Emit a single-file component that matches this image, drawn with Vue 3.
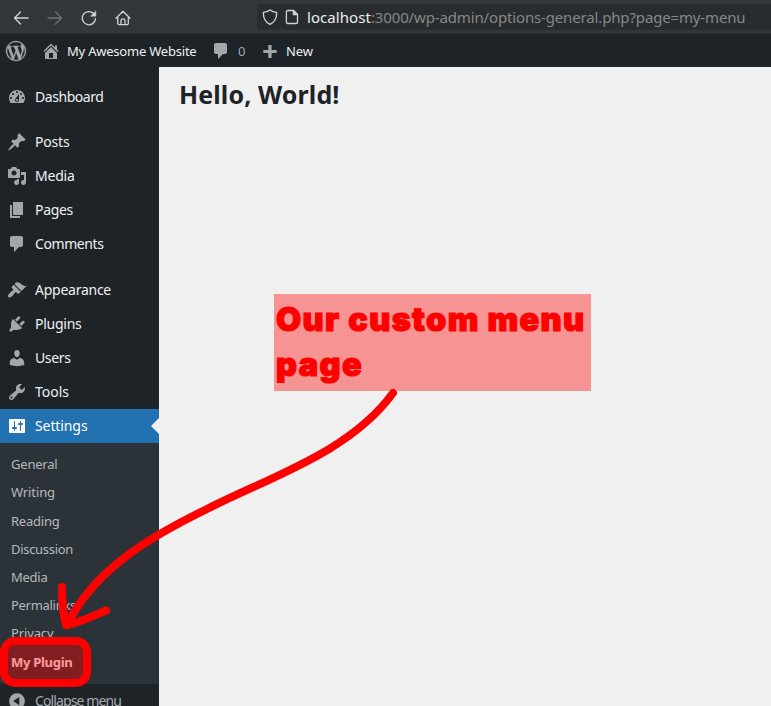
<script setup>
const P = {
  wordpress: 'M20 10c0-5.51-4.49-10-10-10C4.48 0 0 4.49 0 10c0 5.52 4.48 10 10 10 5.51 0 10-4.48 10-10zM7.78 15.37L4.37 6.22c.55-.02 1.17-.08 1.17-.08.5-.06.44-1.13-.06-1.11 0 0-1.45.11-2.37.11-.18 0-.37 0-.58-.01C4.12 2.69 6.87 1.11 10 1.11c2.33 0 4.45.87 6.05 2.34-.68-.11-1.65.39-1.65 1.58 0 .74.45 1.36.9 2.1.35.61.55 1.36.55 2.46 0 1.49-1.4 5-1.4 5l-3.03-8.37c.54-.02.82-.17.82-.17.5-.05.44-1.25-.06-1.22 0 0-1.44.12-2.38.12-.87 0-2.33-.12-2.33-.12-.5-.03-.56 1.2-.06 1.22l.92.08 1.26 3.41zM17.41 10c.24-.64.74-1.87.43-4.25.7 1.29 1.05 2.71 1.05 4.25 0 3.29-1.73 6.24-4.4 7.78.97-2.59 1.94-5.2 2.92-7.78zM6.1 18.09C3.12 16.65 1.11 13.53 1.11 10c0-1.3.23-2.48.72-3.59C3.25 10.3 4.67 14.2 6.1 18.09zm4.03-6.63l2.58 6.98c-.86.29-1.76.45-2.71.45-.79 0-1.57-.11-2.29-.33.81-2.38 1.62-4.74 2.42-7.1z',
  home: 'M16 8.5l1.53 1.53-1.06 1.06L10 4.6l-6.47 6.49-1.06-1.06L10 2.5l4 4v-2h2v4zm-6-2.46l6 5.99V18H4v-5.97zM12 17v-5H8v5h4z',
  comments: 'M5 2h9c1.1 0 2 .9 2 2v7c0 1.1-.9 2-2 2h-2l-5 5v-5H5c-1.1 0-2-.9-2-2V4c0-1.1.9-2 2-2z',
  dashboard: 'M3.76 16h12.48c1.1-1.37 1.76-3.11 1.76-5 0-4.42-3.58-8-8-8s-8 3.58-8 8c0 1.89.66 3.63 1.76 5zM10 4c.55 0 1 .45 1 1s-.45 1-1 1-1-.45-1-1 .45-1 1-1zM6 6c.55 0 1 .45 1 1s-.45 1-1 1-1-.45-1-1 .45-1 1-1zm8 0c.55 0 1 .45 1 1s-.45 1-1 1-1-.45-1-1 .45-1 1-1zm-5.37 5.55L12 7v6c0 1.1-.9 2-2 2s-2-.9-2-2c0-.57.24-1.08.63-1.45zM4 10c.55 0 1 .45 1 1s-.45 1-1 1-1-.45-1-1 .45-1 1-1zm12 0c.55 0 1 .45 1 1s-.45 1-1 1-1-.45-1-1 .45-1 1-1zm-5 3c0-.55-.45-1-1-1s-1 .45-1 1 .45 1 1 1 1-.45 1-1z',
  post: 'M10.44 3.02l1.82-1.82 6.36 6.35-1.83 1.82c-1.05-.68-2.48-.57-3.41.36l-.75.75c-.92.93-1.04 2.35-.35 3.41l-1.83 1.82-2.41-2.41-2.8 2.79c-.42.42-3.38 2.71-3.8 2.29s1.86-3.39 2.28-3.81l2.79-2.79L4.1 9.36l1.83-1.82c1.05.69 2.48.57 3.4-.36l.75-.75c.93-.92 1.05-2.35.36-3.41z',
  media: 'M13 11V4c0-.55-.45-1-1-1h-1.67L9 1H5L3.67 3H2c-.55 0-1 .45-1 1v7c0 .55.45 1 1 1h10c.55 0 1-.45 1-1zM7 4.5c1.38 0 2.5 1.12 2.5 2.5S8.38 9.5 7 9.5 4.5 8.38 4.5 7 5.62 4.5 7 4.5zM14 6h5v10.5c0 1.38-1.12 2.5-2.5 2.5S14 17.88 14 16.5s1.12-2.5 2.5-2.5c.17 0 .34.02.5.05V9h-3V6zm-4 8.05V13h2v3.5c0 1.38-1.12 2.5-2.5 2.5S7 17.88 7 16.5 8.12 14 9.5 14c.17 0 .34.02.5.05z',
  page: 'M6 15V2h10v13H6zm-1 1h8v2H3V5h2v11z',
  appearance: 'M14.48 11.06L7.41 3.99l1.5-1.5c.5-.56 2.3-.47 3.51.32 1.21.8 1.43 1.28 2.91 2.1 1.18.64 2.45 1.26 4.45.85zm-.71.71L6.7 4.7 4.93 6.47c-.39.39-.39 1.02 0 1.41l1.06 1.06c.39.39.39 1.03 0 1.42-.6.6-1.43 1.11-2.21 1.69-.35.26-.7.53-1.01.84C1.43 14.23.4 16.08 1.4 17.07c.99 1 2.84-.03 4.18-1.36.31-.31.58-.66.85-1.02.57-.78 1.08-1.61 1.69-2.21.39-.39 1.02-.39 1.41 0l1.06 1.06c.39.39 1.02.39 1.41 0z',
  plugins: 'M13.11 4.36L9.87 7.6 8 5.73l3.24-3.24c.35-.34 1.05-.2 1.56.32.52.51.66 1.21.31 1.55zm-8 1.77l.91-1.12 9.01 9.01-1.19.84c-.71.71-2.63 1.16-3.82 1.16H6.14L4.9 17.26c-.59.59-1.54.59-2.12 0-.59-.58-.59-1.53 0-2.12l1.24-1.24v-3.88c0-1.13.4-3.19 1.09-3.89zm7.26 3.97l3.24-3.24c.34-.35 1.04-.21 1.55.31.52.51.66 1.21.31 1.55l-3.24 3.25z',
  users: 'M10 9.25c-2.27 0-2.73-3.44-2.73-3.44C7 4.02 7.82 2 9.97 2c2.16 0 2.98 2.02 2.71 3.81 0 0-.41 3.44-2.68 3.44zm0 2.57L12.72 10c2.39 0 4.52 2.33 4.52 4.53v2.49s-3.65 1.13-7.24 1.13c-3.65 0-7.24-1.13-7.24-1.13v-2.49c0-2.25 1.94-4.48 4.47-4.48z',
  tools: 'M16.68 9.77c-1.34 1.34-3.3 1.67-4.95.99l-5.41 6.52c-.99.99-2.59.99-3.58 0s-.99-2.59 0-3.57l6.52-5.42c-.68-1.65-.35-3.61.99-4.95 1.28-1.28 3.12-1.62 4.72-1.06l-2.89 2.89 2.82 2.82 2.86-2.87c.53 1.58.18 3.39-1.08 4.65zM3.81 16.21c.4.39 1.04.39 1.43 0 .4-.4.4-1.04 0-1.43-.39-.4-1.03-.4-1.43 0-.39.39-.39 1.03 0 1.43z',
  settings: 'M18 16V4c0-.55-.45-1-1-1H3c-.55 0-1 .45-1 1v12c0 .55.45 1 1 1h14c.55 0 1-.45 1-1zM8 11h1c.55 0 1 .45 1 1s-.45 1-1 1H8v1.5c0 .28-.22.5-.5.5s-.5-.22-.5-.5V13H6c-.55 0-1-.45-1-1s.45-1 1-1h1V5.5c0-.28.22-.5.5-.5s.5.22.5.5V11zm5-2h-1c-.55 0-1-.45-1-1s.45-1 1-1h1V5.5c0-.28.22-.5.5-.5s.5.22.5.5V7h1c.55 0 1 .45 1 1s-.45 1-1 1h-1v5.5c0 .28-.22.5-.5.5s-.5-.22-.5-.5V9z',
  collapse: 'M10 2.2a7.9 7.9 0 1 0 0 15.8 7.9 7.9 0 0 0 0-15.8zM12.3 6v8.2L6.2 10.1z',
}

// Menu groups, each label with its text width in pixels
const groups = [
  [{ t: 'Dashboard', i: 'dashboard', w: 68.5 }],
  [
    { t: 'Posts', i: 'post', w: 34.5 },
    { t: 'Media', i: 'media', w: 39.5 },
    { t: 'Pages', i: 'page', w: 38 },
    { t: 'Comments', i: 'comments', w: 68.5 },
  ],
  [
    { t: 'Appearance', i: 'appearance', w: 76 },
    { t: 'Plugins', i: 'plugins', w: 46.5 },
    { t: 'Users', i: 'users', w: 35.5 },
    { t: 'Tools', i: 'tools', w: 34 },
    { t: 'Settings', i: 'settings', w: 52.5, active: true },
  ],
]
const submenu = [
  { t: 'General', w: 46.5 },
  { t: 'Writing', w: 44 },
  { t: 'Reading', w: 48.5 },
  { t: 'Discussion', w: 62 },
  { t: 'Media', w: 36.5 },
  { t: 'Permalinks', w: 65 },
  { t: 'Privacy', w: 42.5 },
  { t: 'My Plugin', w: 61.5, current: true },
]

// Spreads the letter spacing so that the text takes the given width
const vFit = {
  mounted(el, { value }) {
    const natural = el.getBoundingClientRect().width
    el.style.letterSpacing = (value - natural) / el.textContent.length + 'px'
  },
}
</script>

<template>
  <div class="screen">
    <header class="browser">
      <nav class="nav">
        <svg viewBox="0 0 16 16"><path d="M15 8H1.5M7.5 2L1.5 8l6 6" /></svg>
        <svg class="dim" viewBox="0 0 16 16"><path d="M1 8h13.5M8.5 2l6 6-6 6" /></svg>
        <svg viewBox="0 0 16 16"><path d="M14.5 8.6A6.6 6.6 0 1 1 12.6 3.5" /><path class="solid" d="M14.8 1.2v5h-5z" /></svg>
        <svg viewBox="0 0 16 16"><path d="M1 8.2L8 1.3l7 6.9M2.7 7v6.3a1.4 1.4 0 0 0 1.4 1.4h7.8a1.4 1.4 0 0 0 1.4-1.4V7M6 14.5v-3.6a2 2 0 0 1 4 0v3.6" /></svg>
      </nav>
      <div class="url">
        <svg viewBox="0 0 16 16"><path d="M8 1c2 1.5 4 2.2 6.6 2.3.2 5-1.6 9.7-6.6 12C3 13 1.2 8.3 1.4 3.3 4 3.2 6 2.5 8 1z" /></svg>
        <svg class="doc" viewBox="0 0 16 16"><path d="M3.700 1.500h6L13.500 5.500v7.700a1.300 1.300 0 0 1-1.300 1.300H3.700a1.300 1.300 0 0 1-1.300-1.300V2.800a1.300 1.300 0 0 1 1.300-1.300z" /><path class="solid" d="M9 1.500V6h4.500z" /></svg>
        <span class="host" v-fit="64">localhost</span><span class="rest" v-fit="374.5">:3000/wp-admin/options-general.php?page=my-menu</span>
      </div>
    </header>

    <div class="adminbar">
      <svg class="icon wp" viewBox="0 0 20 20"><path :d="P.wordpress" /></svg>
      <svg class="icon site" viewBox="0 0 20 20"><path :d="P.home" /></svg>
      <span v-fit="129.5">My Awesome Website</span>
      <svg class="icon bubble" viewBox="0 0 20 20"><path :d="P.comments" /></svg>
      <span class="count">0</span>
      <svg class="icon plus" viewBox="0 0 20 20"><path d="M8.300 4h3.300v5h5v3h-5v5H8.300v-5h-5V9h5z" /></svg>
      <span v-fit="27">New</span>
    </div>

    <div class="body">
      <aside class="sidebar">
        <ul v-for="(group, g) in groups" :key="g" class="group">
          <li v-for="item in group" :key="item.t" class="item" :class="{ active: item.active }">
            <svg class="icon" viewBox="0 0 20 20"><path :d="P[item.i]" fill-rule="evenodd" /></svg>
            <span v-fit="item.w">{{ item.t }}</span>
          </li>
        </ul>
        <ul class="submenu">
          <li v-for="s in submenu" :key="s.t" :class="{ current: s.current }"><span v-fit="s.w">{{ s.t }}</span></li>
        </ul>
        <div class="item collapse">
          <svg class="icon" viewBox="0 0 20 20"><path :d="P.collapse" fill-rule="evenodd" /></svg>
          <span v-fit="86">Collapse menu</span>
        </div>
      </aside>
      <main class="content">
        <h1><span v-fit="160.5">Hello, World!</span></h1>
      </main>
    </div>

    <div class="note">
      <div><span v-fit="309.5">Our custom menu</span></div>
      <div><span v-fit="87">page</span></div>
    </div>
    <svg class="drawing" viewBox="0 0 771 706">
      <path d="M393 393C350 452 272 476 207 509C152 536 95 568 67 625" />
      <path d="M62 587C62 601 63 614 66 625C80 623 93 616 106 610.5" />
      <rect x="4" y="641" width="83" height="42" rx="11" />
    </svg>
  </div>
</template>

<style>
body { overflow: hidden; background: #f0f0f0; }
</style>

<style scoped>
.screen {
  position: relative;
  width: 771px;
  height: 706px;
  overflow: hidden;
  display: flex;
  flex-direction: column;
  font-family: "Noto Sans", sans-serif;
  background: #f0f0f0;
}
span { white-space: pre; }
ul { list-style: none; margin: 0; padding: 0; }
.browser {
  height: 34px;
  flex: none;
  box-sizing: border-box;
  display: flex;
  align-items: center;
  background: #333739;
  border-bottom: 1px solid #2c2c2c;
}
.browser svg { width: 16px; height: 16px; flex: none; fill: none; stroke: #d4d4d4; stroke-width: 1.3; stroke-linecap: round; stroke-linejoin: round; }
.browser .solid { fill: #d4d4d4; stroke-width: .5; }
.nav { display: flex; gap: 18px; padding-left: 13px; width: 244px; padding-top: 2px; box-sizing: content-box; }
.browser .nav .dim { stroke: #717476; }
.url {
  display: flex;
  align-items: center;
  flex: 1;
  height: 26px;
  margin-top: 1px;
  padding-left: 5px;
  background: #292c2e;
  border-radius: 4px 0 0 4px;
  font-size: 15px;
  color: #85888a;
}
.url .doc { margin-left: 6px; margin-right: 7px; }
.host { color: #eee; }
.adminbar {
  height: 33px;
  flex: none;
  display: flex;
  align-items: center;
  background: #1d2327;
  color: #f0f0f1;
  font-size: 13px;
}
.icon { width: 20px; height: 20px; flex: none; fill: #a2a7ab; }
.wp { margin-left: 6px; stroke: #a2a7ab; stroke-width: .3; overflow: visible; }
.site { margin: 0 6px 0 15px; }
.bubble { margin-left: 14.5px; margin-right: 7px; }
.count { color: #a2a7ab; width: 22px; }
.plus { margin-right: 6px; }
.body { display: flex; flex: 1; min-height: 0; }
.sidebar { width: 159px; flex: none; padding-top: 13px; box-sizing: border-box; background: #1d2327; color: #f0f0f1; }
.group + .group { margin-top: 11px; }
.group:nth-child(3) { margin-top: 12px; }
.item { position: relative; display: flex; align-items: center; gap: 8px; height: 34px; padding-left: 7px; font-size: 14px; }
.item span { padding-bottom: 2px; }
.item.active { background: #2271b1; color: #fff; }
.item.active .icon { fill: #fff; }
.item.active::after {
  content: "";
  position: absolute;
  right: 0;
  top: 9px;
  border: 8px solid transparent;
  border-left-width: 0;
  border-right-color: #f0f0f0;
}
.submenu { height: 241px; box-sizing: border-box; padding: 7px 0 0 11px; background: #2c3338; color: #b5b9bd; font-size: 13px; }
.submenu li { height: 28px; display: flex; align-items: center; }
.submenu li:nth-child(3), .submenu .current { margin-top: 1px; }
.submenu .current { color: #fff; font-weight: 700; }
.collapse { color: #a7aaad; }
.content { flex: 1; padding: 9px 0 0 20px; }
h1 { margin: 0; font-size: 25px; line-height: 36px; font-weight: 700; color: #1d2327; }
.note {
  position: absolute;
  left: 274px;
  top: 294px;
  width: 317px;
  height: 97px;
  box-sizing: border-box;
  padding: 3px 0 0 2px;
  background: rgba(255, 0, 0, .39);
  color: #f00;
  font: 900 32.5px/45px Inter, sans-serif;
  -webkit-text-stroke: 1.2px #f00;
}
.drawing { position: absolute; inset: 0; width: 771px; height: 706px; fill: none; stroke: #f00; stroke-width: 8; stroke-linecap: round; stroke-linejoin: round; }
.drawing rect { fill: rgba(255, 0, 0, .4); }
</style>
